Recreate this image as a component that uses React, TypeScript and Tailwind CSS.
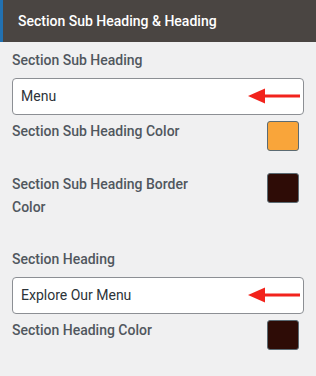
import React from "react";

const font = { fontFamily: "Roboto, 'Noto Sans', sans-serif" };

const Arrow = () => (
  <svg className="absolute left-[235px] top-[9px]" width="53" height="16" viewBox="0 0 53 16">
    <line x1="14" y1="8" x2="52" y2="8" stroke="#f2231c" strokeWidth="3" />
    <polygon points="0,8 17,0.5 17,15.5" fill="#f2231c" />
  </svg>
);

const TextInput = ({ value }: { value: string }) => (
  <div className="relative mt-[6px] flex h-[37px] items-center rounded-[4px] border border-[#8c8f94] bg-white pl-[8px] text-[14px] text-[#2c3338]">
    {value}
    <Arrow />
  </div>
);

const ColorRow = ({ label, color, className, swatchTop }: { label: string; color: string; className?: string; swatchTop?: string }) => (
  <div className={"flex items-start justify-between " + (className ?? "")}>
    <div className="w-[190px] text-[14px] font-medium leading-[23px] text-[#50575e]">{label}</div>
    <div
      className={"mr-[5px] h-[30px] w-[32px] rounded-[3px] border border-[#5b6b73] " + (swatchTop ?? "mt-[1px]")}
      style={{ backgroundColor: color }}
    />
  </div>
);

export default function App() {
  return (
    <div className="h-[376px] w-[316px] bg-[#f0f0f1]" style={font}>
      <div className="flex h-[42px] items-center border-l-[3px] border-[#2271b1] bg-[#4a4542] pl-[15px] text-[14px] font-medium text-white">
        Section Sub Heading &amp; Heading
      </div>
      <div className="px-3">
        <div className="mt-[7px] text-[14px] font-medium leading-[23px] text-[#50575e]">Section Sub Heading</div>
        <TextInput value="Menu" />
        <ColorRow className="mt-[5px]" label="Section Sub Heading Color" color="#f9a53a" />
        <ColorRow className="mt-[22px]" swatchTop="mt-0" label="Section Sub Heading Border Color" color="#2e0c06" />
        <div className="mt-[29px] text-[14px] font-medium leading-[23px] text-[#50575e]">Section Heading</div>
        <TextInput value="Explore Our Menu" />
        <ColorRow className="mt-[5px]" label="Section Heading Color" color="#2e0c06" />
      </div>
    </div>
  );
}
